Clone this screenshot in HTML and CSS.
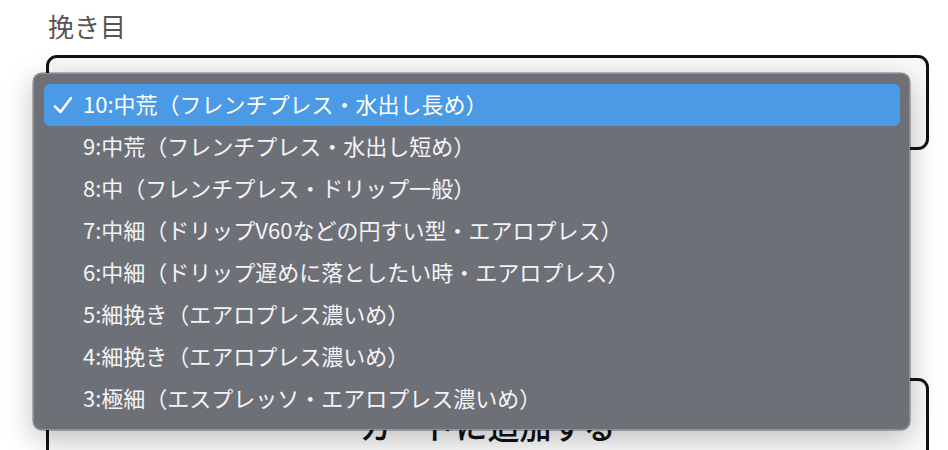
FILE: index.html
```html
<!DOCTYPE html>
<html lang="ja">
<head>
<meta charset="utf-8">
<link rel="stylesheet" href="styles.css">
</head>
<body>
<div class="page">
  <div class="label">挽き目</div>
  <div class="select"></div>
  <div class="button">カードに追加する</div>
</div>
<div class="popup">
  <div class="row selected">
    <svg class="check" viewBox="0 0 20 18" width="20" height="18"><path d="M2 10.5 L7.5 16 L18 2" fill="none" stroke="#fff" stroke-width="2.6" stroke-linecap="round" stroke-linejoin="round"/></svg>
    10:中荒（フレンチプレス・水出し長め）
  </div>
  <div class="row">9:中荒（フレンチプレス・水出し短め）</div>
  <div class="row">8:中（フレンチプレス・ドリップ一般）</div>
  <div class="row">7:中細（ドリップV60などの円すい型・エアロプレス）</div>
  <div class="row">6:中細（ドリップ遅めに落としたい時・エアロプレス）</div>
  <div class="row">5:細挽き（エアロプレス濃いめ）</div>
  <div class="row">4:細挽き（エアロプレス濃いめ）</div>
  <div class="row">3:極細（エスプレッソ・エアロプレス濃いめ）</div>
</div>
</body>
</html>
```
FILE: styles.css
```css
html, body {
  margin: 0;
  padding: 0;
  background: #ffffff;
  height: 450px;
  overflow: hidden;
  font-family: "Noto Sans CJK JP", "Noto Sans", sans-serif;
}
.page {
  padding: 8px 19px 0 46px;
  display: flex;
  flex-direction: column;
}
.label {
  font-size: 26px;
  line-height: 36px;
  color: #555;
  height: 47px;
  padding-left: 2px;
}
.select {
  height: 89px;
  border: 3px solid #111;
  border-radius: 11px;
  background: #fafafa;
}
.button {
  margin-top: 228px;
  height: 100px;
  border: 3px solid #111;
  border-bottom: none;
  border-radius: 11px 11px 0 0;
  background: #fafafa;
  text-align: center;
  font-size: 32px;
  font-weight: 500;
  line-height: 32px;
  padding-top: 28px;
  color: #111;
  box-sizing: border-box;
}
.popup {
  position: absolute;
  left: 33px;
  top: 73px;
  width: 877px;
  height: 357px;
  box-sizing: border-box;
  background: #6e7078;
  border: 1px solid #8f9095;
  border-radius: 9px;
  box-shadow: 0 8px 30px rgba(0,0,0,0.25), 0 0 0 0.5px rgba(0,0,0,0.5);
  padding: 10px 9px 10px 10px;
  display: flex;
  flex-direction: column;
}
.row {
  position: relative;
  height: 42px;
  box-sizing: border-box;
  line-height: 38px;
  padding: 0 0 4px 39px;
  font-size: 22px;
  color: #f4f4f6;
  border-radius: 6px;
  white-space: nowrap;
}
.row.selected {
  background: #4a9ae6;
  color: #ffffff;
}
.check {
  position: absolute;
  left: 9px;
  top: 12px;
}
```
